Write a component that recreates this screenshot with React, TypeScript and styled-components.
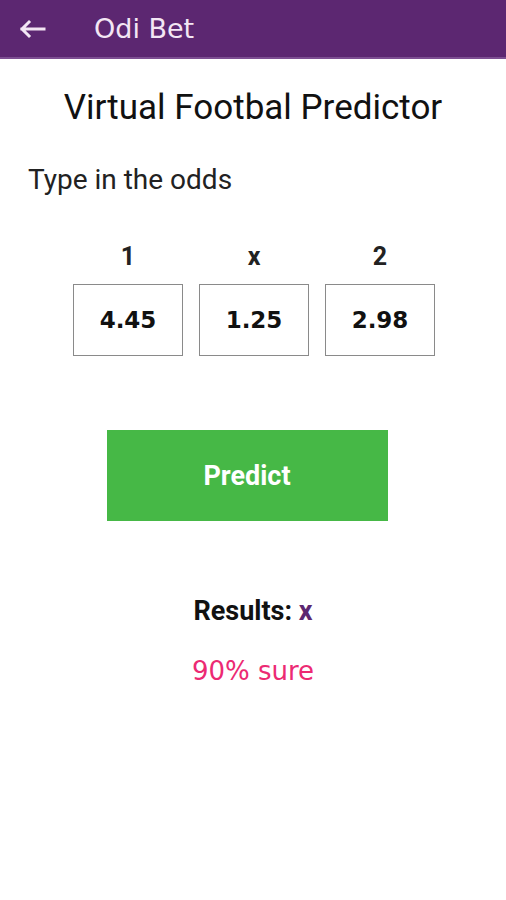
import styled, { createGlobalStyle } from "styled-components";

const GlobalStyle = createGlobalStyle`
  body {
    margin: 0;
    background: #ffffff;
    font-family: Roboto, "Liberation Sans", sans-serif;
  }
`;

const odds = [
  { label: "1", value: "4.45" },
  { label: "x", value: "1.25" },
  { label: "2", value: "2.98" },
];

function App() {
  return (
    <>
      <GlobalStyle />
      <Screen>
        <AppBar>
          <BackButton aria-label="back">
            <svg width="28" height="20" viewBox="0 0 28 20" fill="none">
              <path d="M26 10H4M11 3L4 10l7 7" stroke="#f3e6f4" strokeWidth="3" strokeLinecap="square" />
            </svg>
          </BackButton>
          <BarTitle>Odi Bet</BarTitle>
        </AppBar>
        <Content>
          <Heading>Virtual Footbal Predictor</Heading>
          <Hint>Type in the odds</Hint>
          <OddsRow>
            {odds.map((odd) => (
              <OddColumn key={odd.label}>
                <OddLabel>{odd.label}</OddLabel>
                <OddBox>{odd.value}</OddBox>
              </OddColumn>
            ))}
          </OddsRow>
          <PredictButton>Predict</PredictButton>
          <Results>
            Results: <Pick>x</Pick>
          </Results>
          <Confidence>90% sure</Confidence>
        </Content>
      </Screen>
    </>
  );
}

const Screen = styled.div`
  width: 506px;
  min-height: 900px;
  background: #ffffff;
`;

const AppBar = styled.header`
  height: 59px;
  background: #5c2771;
  border-bottom: 2px solid #7d4f92;
  display: flex;
  align-items: center;
  padding-left: 18px;
  box-sizing: border-box;
`;

const BackButton = styled.div`
  width: 28px;
  height: 20px;
  display: flex;
`;

const BarTitle = styled.span`
  margin-left: 48px;
  font-family: "DejaVu Sans", Verdana, sans-serif;
  font-size: 27px;
  color: #f3e6f4;
`;

const Content = styled.main`
  display: flex;
  flex-direction: column;
  align-items: center;
`;

const Heading = styled.h1`
  margin: 28px 0 0;
  font-size: 35px;
  font-weight: 400;
  color: #111;
  line-height: 42px;
`;

const Hint = styled.p`
  align-self: flex-start;
  margin: 34px 0 0 28px;
  font-size: 28px;
  color: #222;
  line-height: 34px;
`;

const OddsRow = styled.div`
  display: flex;
  gap: 16px;
  margin-top: 45px;
  margin-left: 2px;
`;

const OddColumn = styled.div`
  display: flex;
  flex-direction: column;
  align-items: center;
`;

const OddLabel = styled.span`
  font-size: 25px;
  font-weight: 700;
  color: #222;
  line-height: 30px;
`;

const OddBox = styled.div`
  margin-top: 12px;
  width: 110px;
  height: 72px;
  box-sizing: border-box;
  border: 1.5px solid #8a8a8a;
  display: flex;
  align-items: center;
  justify-content: center;
  font-family: "DejaVu Sans", Verdana, sans-serif;
  font-weight: 700;
  font-size: 23px;
  color: #111;
`;

const PredictButton = styled.button`
  margin: 74px 12px 0 0;
  width: 281px;
  height: 91px;
  border: none;
  background: #46b846;
  color: #ffffff;
  font-family: Roboto, "Liberation Sans", sans-serif;
  font-weight: 700;
  font-size: 27px;
  cursor: pointer;
`;

const Results = styled.p`
  margin: 73px 0 0;
  font-size: 27px;
  font-weight: 700;
  color: #111;
  line-height: 34px;
`;

const Pick = styled.span`
  color: #5c2771;
`;

const Confidence = styled.p`
  margin: 26px 0 0;
  font-family: "DejaVu Sans", Verdana, sans-serif;
  font-size: 26px;
  color: #ec2a73;
  line-height: 34px;
`;

export default App;
